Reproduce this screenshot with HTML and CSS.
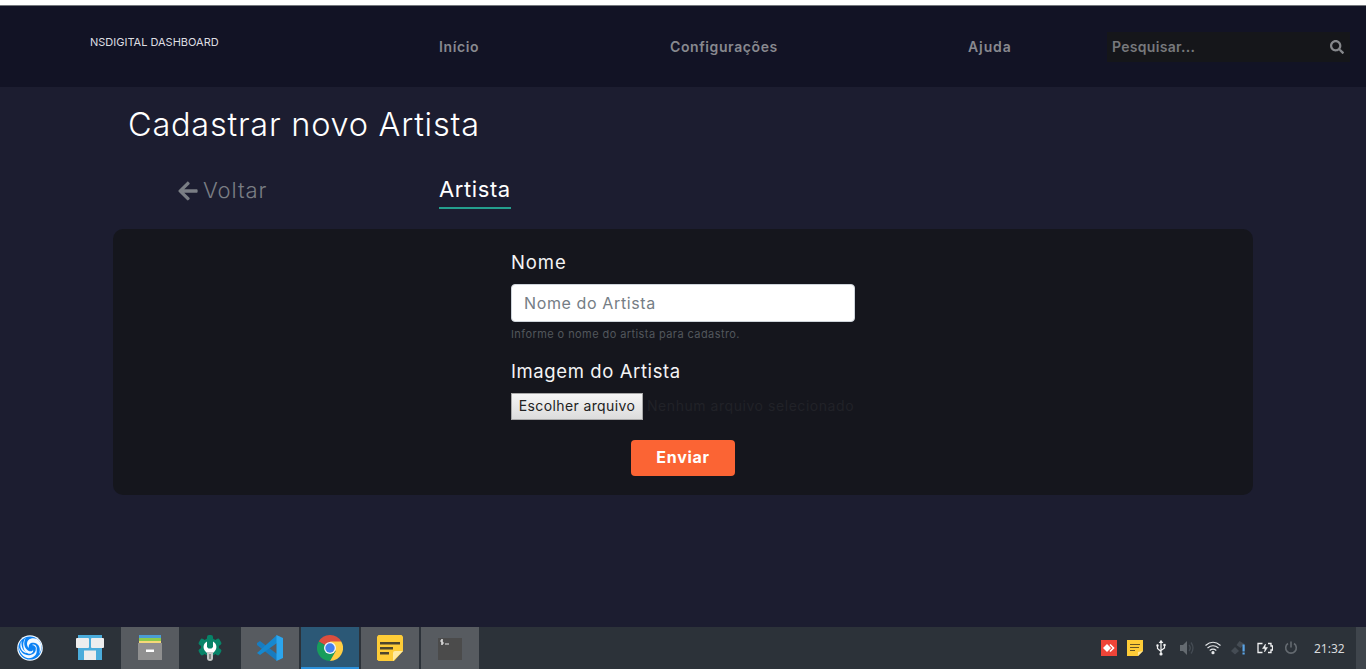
FILE: index.html
```html
<!DOCTYPE html>
<html lang="pt-BR">
<head>
<meta charset="utf-8">
<title>NSDigital Dashboard</title>
<link rel="stylesheet" href="styles.css">
</head>
<body>
<header class="navbar">
  <a class="brand">NSDIGITAL DASHBOARD</a>
  <nav class="menu">
    <a class="link home">Início</a>
    <a class="link config">Configurações</a>
    <a class="link help">Ajuda</a>
  </nav>
  <div class="search">
    <span class="search-text">Pesquisar...</span>
    <svg class="search-icon" viewBox="0 0 512 512"><path fill="currentColor" d="M505 442.700 405.300 343c-4.500-4.500-10.600-7-17-7H372c27.600-35.300 44-79.700 44-128C416 93.100 322.900 0 208 0S0 93.100 0 208s93.100 208 208 208c48.300 0 92.700-16.400 128-44v16.300c0 6.400 2.500 12.500 7 17l99.700 99.700c9.400 9.400 24.600 9.400 33.900 0l28.300-28.300c9.400-9.400 9.400-24.600.1-34zM208 336c-70.700 0-128-57.200-128-128 0-70.700 57.200-128 128-128 70.700 0 128 57.200 128 128 0 70.700-57.200 128-128 128z"/></svg>
  </div>
</header>
<main class="page">
  <h1 class="title"><span>Cadastrar novo Artista</span></h1>
  <div class="tabs">
    <a class="back"><svg class="arrow" viewBox="0 0 448 512"><path fill="currentColor" d="M257.500 445.100l-22.200 22.200c-9.400 9.400-24.600 9.400-33.900 0L7 273c-9.400-9.400-9.400-24.600 0-33.900L201.400 44.700c9.400-9.400 24.600-9.400 33.900 0l22.200 22.200c9.500 9.500 9.300 25-.4 34.300L136.600 216H424c13.300 0 24 10.700 24 24v32c0 13.300-10.700 24-24 24H136.600l120.500 114.800c9.800 9.300 10 24.800.4 34.300z"/></svg><span>Voltar</span></a>
    <a class="tab">Artista</a>
  </div>
  <section class="card">
    <form class="form">
      <label class="label name-label">Nome</label>
      <div class="input">Nome do Artista</div>
      <small class="hint">Informe o nome do artista para cadastro.</small>
      <label class="label image-label">Imagem do Artista</label>
      <div class="file"><span class="file-button">Escolher arquivo</span><span class="file-name">Nenhum arquivo selecionado</span></div>
      <div class="submit">Enviar</div>
    </form>
  </section>
</main>
<footer class="taskbar">
  <div class="apps">
    <div class="app"><svg viewBox="0 0 26 26"><circle cx="13" cy="13" r="12.800" fill="#f2f9ff"/><circle cx="13" cy="13" r="11.600" fill="#0b82f4"/><g fill="#f4faff"><path d="M1.500 11c2 7 7 10 12 9 4-1 6-4 5-7 3 4 0 9-5 10C8 24 2 19 1.500 11z"/><path d="M4.500 6c-.5 6 2 11 7 12-7 1-10-7-7-12z"/><path d="M9 2.500c-3 5-2 10 2 13 2 1.500 5 1 5-1 1 3-2 5-5 4C5 16 5 6 9 2.500z"/><path d="M20 4c-5-2-10 0-10 5 0 2 1 3 2 4-1-4 2-6 6-5 4 1 6 6 4 11 4-5 3-12-2-15z"/><path d="M15 10c3 0 5 3 4 7 2-4 0-9-4-7z"/></g></svg></div>
    <div class="app"><svg class="wide" viewBox="0 0 28 26"><path d="M2 0h24v25H2z" fill="#4bacdb"/><path d="M8 15.500h12V25H8z" fill="#ededed"/><rect y="3" width="13" height="10" rx="1" fill="#eee"/><rect x="15" y="3" width="13" height="10" rx="1" fill="#eee"/></svg></div>
    <div class="app open"><svg viewBox="0 0 26 26"><path d="M2 0h22v4H2z" fill="#4b9cd4"/><path d="M2 3h22v3H2z" fill="#8dca4b"/><path d="M2 6h22v3H2z" fill="#f6d878"/><path d="M1 8h24v17H1z" fill="#909090"/><path d="M9 14.500h8v2.500H9z" fill="#fff"/></svg></div>
    <div class="app"><svg viewBox="0 0 26 26"><g fill="#078468"><circle cx="13" cy="12" r="9"/><rect x="10" y="0" width="6" height="24" rx="2"/><rect x="9.500" y="0" width="7" height="24" rx="2" transform="rotate(60 13 12)"/><rect x="9.500" y="0" width="7" height="24" rx="2" transform="rotate(120 13 12)"/></g><path d="M10 6.500c-4 2-4.500 7-1.500 10l2 2h5l2-2c3-3 2.500-8-1.500-10v5.500l-1.500 1.500h-3L10 12z" fill="#fff"/><path d="M10 17h6v6a3 3 0 0 1-6 0z" fill="#c4c8c6"/><path d="M12.300 19h1.400v5h-1.400z" fill="#656d69"/></svg></div>
    <div class="app open"><svg viewBox="0 0 26 26"><path d="M0 8 3 6l17 13v7L0 10z" fill="#187cc0"/><path d="M0 18 20 0v8L3 20l-3-2z" fill="#1688cf"/><path d="m19.500 0 6.500 3v20l-6.500 3z" fill="#2ba5ed"/></svg></div>
    <div class="app active"><svg viewBox="0 0 26 26"><path d="M13 13 1.740 6.500A13 13 0 0 1 24.260 6.500z" fill="#db4e3e"/><path d="M13 13 1.740 6.500A13 13 0 0 0 13 26l5.600-9.800z" fill="#189d5b"/><path d="M13 6.500h11.260A13 13 0 0 1 13 26l5.600-9.800z" fill="#ffce43"/><circle cx="13" cy="13" r="6" fill="#f3f5f6"/><circle cx="13" cy="13" r="4.700" fill="#437fed"/></svg></div>
    <div class="app open"><svg viewBox="0 0 26 26"><path d="M1.500 0h23L26 1.500V16l-9 10H1.500L0 24.500v-23z" fill="#fecc37"/><path d="M16 26V18q0-2 2-2h8z" fill="#ffeaa2"/><path d="M3 7h20v2.500H3zm0 5h13v2.500H3zm0 5h9v2.500H3z" fill="#4c452e"/></svg></div>
    <div class="app open"><svg viewBox="0 0 26 26"><rect x="1" y="3" width="24" height="22" fill="#4b4b4b"/><path d="M6 5H4v2h2v2H4M5 4v6M8 9h4" fill="none" stroke="#e6e6e6" stroke-width="1"/></svg></div>
  </div>
  <div class="tray">
    <svg viewBox="0 0 16 16"><path d="M0 0h16v16H0z" fill="#ef4438"/><path d="m2 8 4-4 4 4-4 4z" fill="#fff"/><path d="m9 4.500 3.500 3.500L9 11.500" fill="none" stroke="#fff" stroke-width="1.600"/></svg>
    <svg viewBox="0 0 16 16"><path d="M0 0h16v11l-5 5H0z" fill="#fecc37"/><path d="M11 16v-4l5-1z" fill="#ffe69a"/><path d="M3 4.500h10M3 7.500h9M3 10.500h5" stroke="#665323" stroke-width="1.200"/></svg>
    <svg viewBox="0 0 16 16" fill="none" stroke="#f2f3f4" stroke-width="1.200"><path d="M8 2v12M4.500 5.500V8.500L8 11.500M11.500 5v3L8 10.500"/><path d="m6.800 2.500 1.200-1.700 1.200 1.700z" fill="#fff"/><circle cx="8" cy="14" r="1" fill="#fff"/><circle cx="4.500" cy="5.500" r=".6"/><path d="M11 4.500h1v1h-1z"/></svg>
    <svg viewBox="0 0 16 16"><path d="M1 5h3l4-4v14l-4-4H1z" fill="#646a70"/><path d="M10 5q2.500 3 0 6M12 2.500q4 5.500 0 11" fill="none" stroke="#454c54" stroke-width="1.300"/></svg>
    <svg viewBox="0 0 16 16" fill="none" stroke="#e4e6e8" stroke-width="1.200"><path d="M.5 5.500q7.500-6.500 15 0M2.500 8q5.500-4.500 11 0M4.700 10.500q3.300-2.600 6.600 0"/><circle cx="8" cy="12.700" r="1" fill="#fff"/></svg>
    <svg viewBox="0 0 16 16"><path d="m8.500 1 5 3-4 4-4-3zM4 7l4 4-4 3.500L0 11z" fill="#454c54"/><path d="M11.500 4.500h2.200v7h-2.200zm0 8h2.200v2h-2.200z" fill="#5ba4e6"/></svg>
    <svg viewBox="0 0 16 16" fill="none" stroke="#f1f2f3" stroke-width="1.300"><path d="M5.500 3.500H1v9h4.500M11 3.500h3v2.500h1.500v4H14v2.500h-3"/><path fill="#f1f2f3" stroke-width=".5" d="M8.500 4 5.500 8.500H8L7.500 12l3-4.500H8z"/></svg>
    <svg viewBox="0 0 16 16" fill="none" stroke="#646a70" stroke-width="1.600"><path d="M5 3.500a5.300 5.300 0 1 0 6 0M8 1.500v6"/></svg>
  </div>
  <span class="clock">21:32</span>
  <span class="desktop"></span>
</footer>
</body>
</html>
```
FILE: styles.css
```css
* { box-sizing: border-box; }
body {
  margin: 0;
  height: 669px;
  display: flex;
  flex-direction: column;
  overflow: hidden;
  background: #1c1d30;
  color: #fff;
  font-family: Inter, "Open Sans", sans-serif;
}
.navbar {
  height: 87px;
  flex: none;
  display: flex;
  align-items: flex-start;
  border-top: 5px solid #fff;
  background: #121325;
  box-shadow: inset 0 1px #73777c;
}
.brand {
  flex: none;
  width: 349px;
  padding: 29px 0 0 90px;
  font-size: 11px;
  line-height: 16px;
  color: #dedee2;
}
.menu { display: flex; width: 668px; margin-left: 90px; padding-top: 32px; }
.link { font-size: 14px; font-weight: 600; line-height: 20px; letter-spacing: .6px; color: #88898f; white-space: nowrap; }
.home { width: 231px; }
.config { width: 298px; }
.help { letter-spacing: .9px; }
.search {
  flex: none;
  width: 243px;
  height: 30px;
  margin-top: 27px;
  padding: 0 6px 0 5px;
  display: flex;
  align-items: center;
  justify-content: space-between;
  background: #15161a;
  color: #85878b;
}
.search-text { padding-bottom: 1px; font-size: 14px; font-weight: 600; letter-spacing: .3px; color: #77797c; }
.search-icon { width: 14px; height: 14px; }
.page { flex: 1; padding: 0 113px; }
.title {
  margin: 0;
  padding: 17px 0 0 15px;
  font-size: 32.5px;
  line-height: 42px;
  font-weight: 350;
  letter-spacing: .75px;
}
.tabs {
  display: flex;
  height: 83px;
  padding: 29px 0 0 65px;
  font-size: 22px;
  line-height: 29px;
  letter-spacing: .6px;
}
.back { display: flex; align-items: center; gap: 5px; width: 261px; height: 30px; padding-top: 1px; color: #7a7e84; font-weight: 350; letter-spacing: .9px; }
.arrow { width: 20px; height: 22px; }
.tab { height: 34px; border-bottom: 2px solid #249f8d; }
.card { height: 266px; border-radius: 10px; background: #15161d; }
.form { width: 344px; margin: 0 auto; padding-top: 20px; display: flex; flex-direction: column; }
.label { font-size: 18.5px; line-height: 24px; letter-spacing: .6px; color: #f4f4f5; }
.name-label { padding-top: 1px; margin-bottom: -1px; letter-spacing: .9px; }
.input {
  height: 38px;
  margin-top: 11px;
  padding: 0 12px;
  border: 1px solid #ced4da;
  border-radius: 4px;
  background: #fff;
  color: #757d85;
  font-size: 16px;
  line-height: 36px;
  letter-spacing: .62px;
}
.hint { margin-top: 4px; font-size: 11px; line-height: 16px; letter-spacing: .42px; color: #52565c; }
.image-label { margin-top: 17px; }
.file { display: flex; gap: 4px; height: 27px; margin-top: 10px; align-items: center; font-size: 14px; white-space: nowrap; }
.file-button {
  width: 132px;
  height: 27px;
  border: 1px solid #a9a9a9;
  background: linear-gradient(#f5f5f5, #dcdcdc);
  color: #222;
  line-height: 24px;
  letter-spacing: .38px;
  text-align: center;
}
.file-name { padding-bottom: 2px; letter-spacing: .55px; color: #212228; }
.submit {
  width: 104px;
  height: 36px;
  margin: 20px auto 0;
  border-radius: 4px;
  background: #fb6434;
  font-size: 16px;
  font-weight: 700;
  line-height: 35px;
  letter-spacing: .7px;
  text-align: center;
}
.taskbar { height: 42px; flex: none; display: flex; align-items: center; background: #2c3239; }
.apps { display: flex; gap: 2px; padding-left: 1px; margin-right: auto; }
.app { width: 58px; height: 42px; display: flex; align-items: center; justify-content: center; }
.app svg { width: 26px; height: 26px; }
.app svg.wide { width: 28px; }
.open { background: #575b60; }
.active { background: #2b5876; box-shadow: inset 0 -2px #2c91dc; }
.tray { display: flex; gap: 10px; margin-right: 15px; }
.tray svg { width: 16px; height: 16px; }
.clock { width: 42px; font: 12px "Noto Sans", sans-serif; color: #d8dadd; }
.desktop { width: 10px; height: 42px; background: #3f454c; }
```
